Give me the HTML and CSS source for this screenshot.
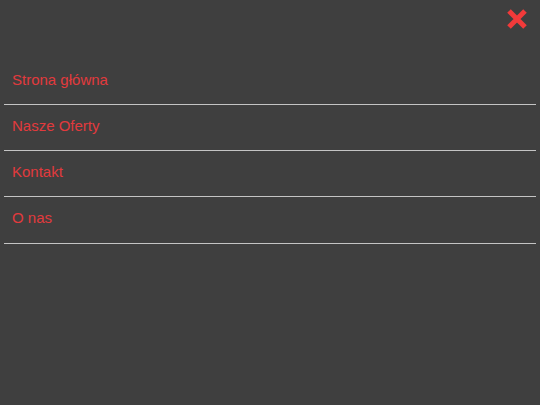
FILE: index.html
```html
<!DOCTYPE html>
<html lang="pl">
<head>
    <meta charset="UTF-8">
    <meta name="viewport" content="width=device-width, initial-scale=1.0">
    <title>Menu</title>
    <link rel="stylesheet" href="styles.css">
</head>
<body>

<div class="menu">
    <div class="menu-header">
        <span class="close">
            <svg width="22" height="22" viewBox="0 0 22 22">
                <path d="M3 3 L19 19 M19 3 L3 19" stroke="#f23a3a" stroke-width="5" stroke-linecap="butt"/>
            </svg>
        </span>
    </div>
    <ul class="menu-list">
        <li><a href="#">Strona główna</a></li>
        <li><a href="#">Nasze Oferty</a></li>
        <li><a href="#">Kontakt</a></li>
        <li><a href="#">O nas</a></li>
    </ul>
</div>

</body>
</html>
```

FILE: styles.css
```css
body {
    font-family: 'Liberation Sans', Arial, sans-serif;
    background-color: #3f3f3f;
    margin: 0;
    padding: 0;
}
.menu {
    padding: 0 4px;
}
.menu-header {
    height: 58.5px;
    display: flex;
    justify-content: flex-end;
    align-items: flex-start;
}
.close {
    display: block;
    margin-top: 8px;
    margin-right: 8px;
    cursor: pointer;
}
.close svg {
    display: block;
}
.menu-list {
    list-style: none;
    margin: 0;
    padding: 0;
}
.menu-list li {
    border-bottom: 1px solid #c4c4c4;
}
.menu-list a {
    display: block;
    padding: 12px 8px 16.33px;
    line-height: 17px;
    font-size: 15px;
    color: #e23a3d;
    text-decoration: none;
}
```
